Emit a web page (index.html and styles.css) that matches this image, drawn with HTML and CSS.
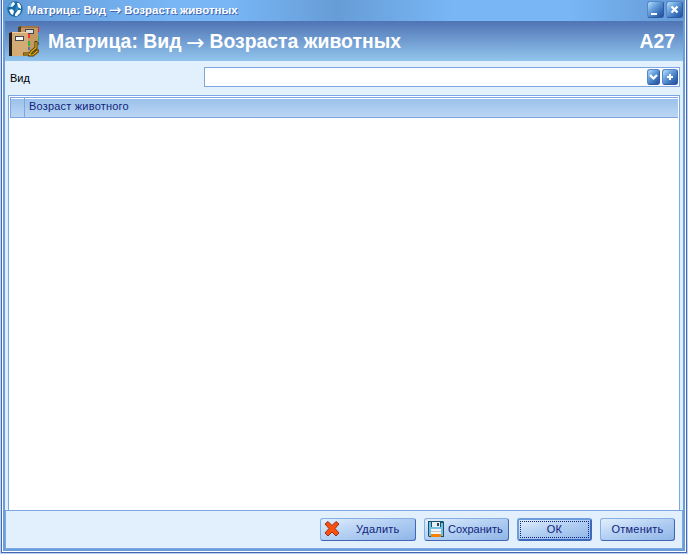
FILE: index.html
```html
<!DOCTYPE html>
<html lang="ru">
<head>
<meta charset="utf-8">
<title>Матрица: Вид → Возраста животных</title>
<link rel="stylesheet" href="styles.css">
</head>
<body>
<div class="window">
<div class="frame">
  <header class="titlebar">
    <svg class="app-icon" width="16" height="16" viewBox="0 0 16 16">
      <circle cx="8" cy="8" r="7.7" fill="#1a6aa5"/>
      <path d="M1 6a7 7 0 0 1 5-5l2 2-3 3z" fill="#5bb4e4"/>
      <path d="M9 5l3 1-1 3-3 1zM11 12l3-2-2 4z" fill="#2c8bc8"/>
      <path d="M5 2l2-1 1 2-3 3-1-1zM10 2l2 0 2 3 0 3-3-2zM2 9l3-1 2 2-1 4-2-1zM8 13l3-4 3 0-1 3-3 3-2 0z" fill="#fff"/>
    </svg>
    <span class="title">Матрица: Вид<span class="arrow"> → </span>Возраста животных</span>
    <button class="glossy win-btn"><svg width="17" height="17"><path d="M4 12h6v2H4z" fill="#fff"/></svg></button>
    <button class="glossy win-btn"><svg width="17" height="17"><path d="M5.5 5.5l6 6M11.5 5.5l-6 6" stroke="#fff" stroke-width="2.2"/></svg></button>
  </header>
  <main class="content">
    <div class="banner">
      <svg class="books" width="31" height="31" viewBox="0 0 31 31">
        <path d="M9 1l3-1h17v29H9z" fill="#c59a62"/>
        <path d="M9 1l3-1v27H9z" fill="#54412a"/>
        <path d="M12 0h17v2H12z" fill="#9e7947"/>
        <path d="M16 3h9v5h-9z" fill="#45474d"/><path d="M17 4h7v3h-7z" fill="#ddd"/>
        <path d="M29 1h1v5h-1z" fill="#f22"/>
        <path d="M29 10h1v5h-1z" fill="#2bb34b"/>
        <path d="M29 16h1v3h-1z" fill="#356092"/>
        <path d="M0 7l3-1h16v24H0z" fill="#d3ac75"/>
        <path d="M0 7l3-1v24H0z" fill="#271c17"/>
        <path d="M3 6h16v1H3z" fill="#ead0a4"/>
        <path d="M6 10h9v5H6z" fill="#424852"/><path d="M7 11h7v3H7z" fill="#fff"/>
        <path d="M19 8h2v4h-2z" fill="#f33"/><path d="M19 15h2v5h-2z" fill="#31b34b"/><path d="M19 21h2v3h-2z" fill="#4779ac"/>
        <path d="M14 28h7l2-3 4-3V15M19 29h5l4-4h2" fill="none" stroke="#4b3600" stroke-width="3"/>
        <path d="M14.500 28h6.500l2-3 4-3v-6M20 29h4l4-4h1.500" fill="none" stroke="#e9b51d" stroke-width="1.2"/>
      </svg>
      <h1>Матрица: Вид<span class="arrow"> → </span>Возраста животных</h1>
      <span class="code">A27</span>
    </div>
    <div class="field-row">
      <label>Вид</label>
      <div class="combo">
        <button class="glossy drop"><svg width="13" height="16"><path d="M3 6l3.500 3.500L10 6" fill="none" stroke="#fff" stroke-width="2.2"/></svg></button>
        <button class="glossy add"><svg width="16" height="16"><path d="M5 8h6M8 5v6" stroke="#fff" stroke-width="2"/></svg></button>
      </div>
    </div>
    <section class="grid">
      <div class="grid-head"><span class="marker"></span><span class="column">Возраст животного</span></div>
    </section>
    <footer class="footer">
      <button class="btn delete">
        <svg width="16" height="16"><path d="M1 3l3-2.500 4 4 4-4 3 2.500-4 4.500 4 4.500-3 3-4-4-4 4-3-3 4-4.500z" fill="#f9500e" stroke="#9b2d18"/></svg>
        <span>Удалить</span>
      </button>
      <button class="btn save">
        <svg width="16" height="16"><path d="M0 0h15l1 1v15H1l-1-1z" fill="#17516c"/><path d="M1 1h2v14H1zM13 2h2v13h-2z" fill="#74bde5"/><path d="M3 6h10v2H3z" fill="#74bde5"/><path d="M4 1h8v5H4z" fill="#e3eff3"/><path d="M9 2h2v3H9z" fill="#244858"/><path d="M3 8h10v5H3z" fill="#f2f4f4"/><path d="M3 10h10v1H3z" fill="#c3cbd0"/><path d="M3 13h10v3H3z" fill="#f58200"/></svg>
        <span>Сохранить</span>
      </button>
      <button class="btn ok"><span>ОК</span></button>
      <button class="btn cancel"><span>Отменить</span></button>
    </footer>
  </main>
</div>
</div>
</body>
</html>
```
FILE: styles.css
```css
* { box-sizing: border-box; }
body {
  margin: 0;
  height: 554px;
  overflow: hidden;
  background: #c3d0ec;
  font: 11px "Liberation Sans", Arial, sans-serif;
  color: #10247c;
}
button { padding: 0; font: inherit; color: inherit; }
svg { display: block; flex: none; }
.window {
  height: 553px;
  margin: 0 1px;
  padding: 0 1px 1px;
  border: solid #4268b8;
  border-width: 0 1px 1px;
  background: #fff;
}
.frame {
  height: 551px;
  display: flex;
  flex-direction: column;
  padding: 0 2px 2px;
  background: #689fdb;
}
.titlebar {
  flex: none;
  height: 21px;
  margin: 0 -2px;
  padding: 1px 2px 0 4px;
  display: flex;
  background: linear-gradient(90deg, #639bd7 0, #78b6f6 25%, #78b6f6 33%, #679dd6 49%, #78b6f6 66%, #78b6f6 83%, #649ad4 100%);
}
.title {
  flex: 1;
  margin-left: 4px;
  font-size: 11.5px;
  font-weight: bold;
  line-height: 18px;
  color: #fff;
  white-space: nowrap;
  text-shadow: 1px 1px #4267ae;
}
.arrow {
  display: inline-flex;
  justify-content: center;
  width: 18px;
  font: 15px/10px "DejaVu Sans", sans-serif;
  transform: translateY(1px);
}
.glossy {
  flex: none;
  border: 1px solid #3159a8;
  border-top-color: #5687c9;
  border-left-color: #5687c9;
  border-radius: 3px;
  background: linear-gradient(135deg, #b9e1fb 0, #6ba4de 35%, #3c72b9 70%, #234c9c 100%);
}
.glossy svg { margin: -1px; }
.win-btn { width: 17px; height: 17px; margin-left: 2px; }
.content {
  flex: 1;
  display: flex;
  flex-direction: column;
  background: #e2f0fe;
}
.banner {
  height: 40px;
  display: flex;
  align-items: center;
  padding: 0 8px 0 4px;
  color: #fff;
  background: linear-gradient(#4f74b5, #92c5ed);
}
.banner h1 {
  flex: 1;
  margin: 0 0 0 8px;
  font-size: 19.4px;
  line-height: 40px;
  white-space: nowrap;
}
.banner .arrow { width: 28px; font-size: 22px; transform: translateY(2px); }
.code { font-size: 19.4px; font-weight: bold; }
.field-row {
  height: 34px;
  display: flex;
  padding: 6px 3px 8px 5px;
}
.field-row label { width: 194px; line-height: 23px; color: #000; }
.combo {
  flex: 1;
  display: flex;
  justify-content: flex-end;
  gap: 2px;
  padding: 1px;
  border: 1px solid #7da7e3;
  background: #fff;
}
.drop { width: 13px; height: 16px; }
.add { width: 16px; height: 16px; }
.grid {
  flex: 1;
  margin: 0 3px;
  padding: 1px 1px 0;
  border: 1px solid #7da7e3;
  border-bottom: 0;
  background: #fff;
}
.grid-head {
  height: 21px;
  display: flex;
  border: 1px solid #7da7e3;
  border-right: 0;
  background: linear-gradient(#fff 0 1px, #9bc1eb 1px, #bcd6f3);
}
.marker { width: 14px; border-right: 1px solid #7da7e3; }
.column { margin-left: 4px; line-height: 16px; letter-spacing: .2px; }
.footer {
  height: 39px;
  display: flex;
  align-items: flex-start;
  justify-content: flex-end;
  padding: 7px 7px 0 0;
  border: 1px solid #7da7e3;
}
.btn {
  height: 23px;
  display: flex;
  align-items: center;
  justify-content: center;
  border: 1px solid #4365b5;
  border-top-color: #85afe4;
  border-left-color: #85afe4;
  border-radius: 3px;
  background: linear-gradient(165deg, #e2effc 0, #b5d1f3 45%, #8fb5e7 100%);
  letter-spacing: .2px;
}
.btn span { padding-bottom: 1px; }
.btn svg { margin-bottom: 1px; }
.delete { width: 96px; justify-content: flex-start; padding-left: 3px; }
.delete span { margin-left: 16px; }
.save { width: 85px; margin-left: 8px; justify-content: flex-start; padding-left: 3px; }
.save span { margin-left: 4px; letter-spacing: 0; }
.ok {
  width: 75px;
  margin-left: 8px;
  border-width: 2px;
  border-color: #6b9ddd #3c69b9 #3c69b9 #6b9ddd;
}
.ok span { flex: 1; height: 17px; margin: 0 1px; line-height: 15px; border: 1px dotted #10247c; }
.cancel { width: 75px; margin-left: 8px; }
```
